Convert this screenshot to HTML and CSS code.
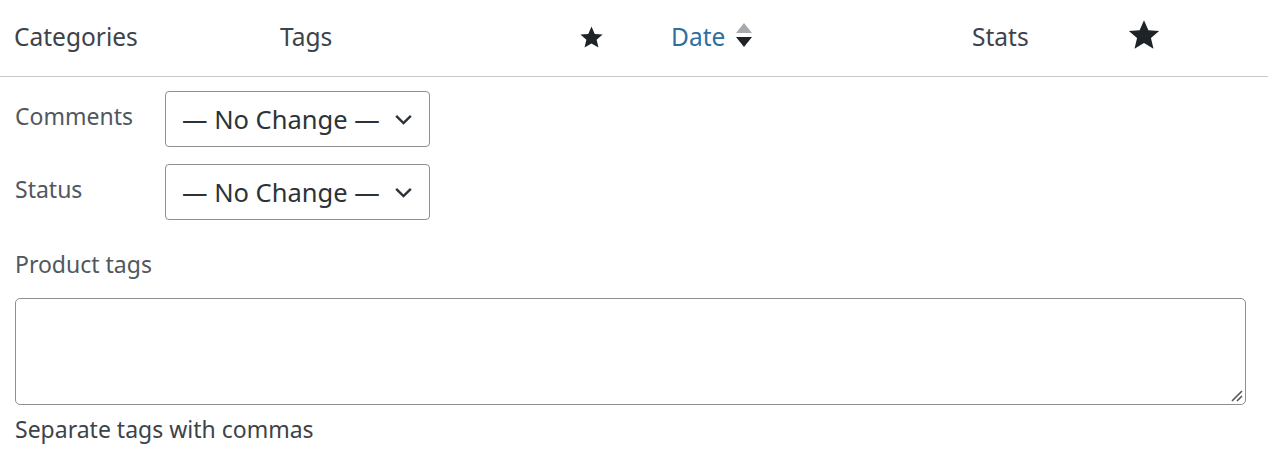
FILE: index.html
```html
<!DOCTYPE html>
<html lang="en">
<head>
<meta charset="utf-8">
<title>Bulk edit</title>
<link rel="stylesheet" href="styles.css">
</head>
<body>
<div class="head">
  <div class="col c-cat">Categories</div>
  <div class="col c-tags">Tags</div>
  <div class="col c-star">
    <svg class="star-sm" viewBox="0 0 24 24" aria-hidden="true"><path d="M12 1.5l3.1 7.1 7.6.6-5.8 5 1.8 7.5L12 17.7l-6.7 4 1.8-7.5-5.8-5 7.6-.6z"/></svg>
  </div>
  <div class="col c-date"><span class="link">Date</span>
    <span class="sort"><span class="up"></span><span class="down"></span></span>
  </div>
  <div class="col c-stats">Stats</div>
  <div class="col c-star2">
    <svg class="star-lg" viewBox="0 0 24 24" aria-hidden="true"><path d="M12 1.5l3.1 7.1 7.6.6-5.8 5 1.8 7.5L12 17.7l-6.7 4 1.8-7.5-5.8-5 7.6-.6z"/></svg>
  </div>
</div>
<div class="form">
  <div class="row">
    <label class="lbl">Comments</label>
    <div class="select"><span>— No Change —</span>
      <svg class="chev" viewBox="0 0 20 12" aria-hidden="true"><path d="M2 2l8 8 8-8"/></svg>
    </div>
  </div>
  <div class="row">
    <label class="lbl">Status</label>
    <div class="select"><span>— No Change —</span>
      <svg class="chev" viewBox="0 0 20 12" aria-hidden="true"><path d="M2 2l8 8 8-8"/></svg>
    </div>
  </div>
  <div class="tags-label">Product tags</div>
  <div class="textarea">
    <svg class="grip" viewBox="0 0 14 14" aria-hidden="true"><path d="M13 3L3 13M13 8L8 13"/></svg>
  </div>
  <div class="help">Separate tags with commas</div>
</div>
</body>
</html>
```
FILE: styles.css
```css
html, body {
  margin: 0;
  padding: 0;
  background: #fff;
}
body {
  font-family: "Noto Sans", "Open Sans", sans-serif;
  color: #3c434a;
  width: 1272px;
  height: 460px;
  overflow: hidden;
}
.head {
  box-sizing: border-box;
  display: grid;
  grid-template-columns: 266px 290px 101px 301px 140px 64px;
  padding-left: 14px;
  padding-bottom: 3px;
  height: 77px;
  border-bottom: 1px solid #c8c9cb;
  width: 1268px;
  align-items: center;
  font-size: 24.5px;
}
.col {
  display: flex;
  align-items: center;
  white-space: nowrap;
}
.c-star { padding-left: 9px; }
.star-sm { width: 25px; height: 25px; fill: #1d2327; margin-top: 2px; }
.c-star2 { padding-left: 15px; }
.star-lg { width: 34px; height: 34px; fill: #1d2327; margin-top: -3px; }
.link { color: #2f6f9f; }
.sort {
  display: flex;
  flex-direction: column;
  gap: 4px;
  margin-left: 11px;
  margin-top: -3px;
}
.up, .down {
  width: 0; height: 0;
  border-left: 8px solid transparent;
  border-right: 8px solid transparent;
}
.up { border-bottom: 10px solid #a7aaad; }
.down { border-top: 10px solid #1d2327; }

.form {
  padding: 14px 15px 0 15px;
}
.row {
  display: flex;
  align-items: flex-start;
  margin-bottom: 17px;
}
.lbl {
  width: 150px;
  font-size: 23px;
  color: #50575e;
  padding-top: 9px;
}
.select {
  box-sizing: border-box;
  width: 265px;
  height: 56px;
  border: 1px solid #8c8f94;
  border-radius: 4px;
  display: flex;
  align-items: center;
  justify-content: space-between;
  padding: 0 16px 0 16px;
  font-size: 25.5px;
  color: #2c3338;
  white-space: nowrap;
}
.chev {
  flex-shrink: 0;
  width: 19px;
  height: 11px;
  fill: none;
  stroke: #2c3338;
  stroke-width: 2.6;
}
.tags-label {
  font-size: 23px;
  color: #50575e;
  margin-top: 28px;
}
.textarea {
  box-sizing: border-box;
  margin-top: 18px;
  width: 1231px;
  height: 107px;
  border: 1px solid #8c8f94;
  border-radius: 5px;
  display: flex;
  justify-content: flex-end;
  align-items: flex-end;
}
.grip {
  width: 14px;
  height: 14px;
  fill: none;
  stroke: #50575e;
  stroke-width: 1.6;
  margin: 0 2px 2px 0;
}
.help {
  font-size: 23px;
  color: #3c434a;
  margin-top: 8px;
}
```
